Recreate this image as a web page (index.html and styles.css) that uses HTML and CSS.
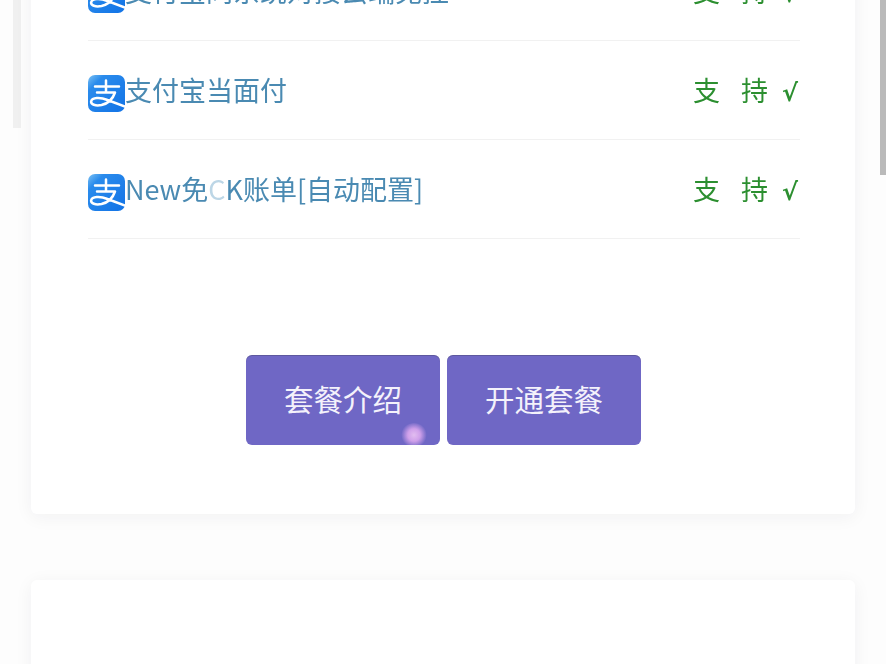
FILE: index.html
```html
<!DOCTYPE html>
<html lang="zh-CN">
<head>
<meta charset="utf-8">
<title>套餐</title>
<link rel="stylesheet" href="styles.css">
</head>
<body>
<svg class="defs" width="0" height="0" aria-hidden="true">
  <defs>
    <linearGradient id="ali" x1="0" y1="0" x2="1" y2="1">
      <stop offset="0" stop-color="#7cc2f3"/>
      <stop offset="0.22" stop-color="#2a8bec"/>
      <stop offset="1" stop-color="#1273e6"/>
    </linearGradient>
    <symbol id="alipay" viewBox="0 0 37 37">
      <rect width="37" height="37" rx="7" fill="url(#ali)"/>
      <path d="M7 11.5H31M18 5.5V17.5M9 17.5H27C25 23.5 20 28.5 13.5 30C7.5 31.2 2.5 29.5 3.2 26.2C4 22.5 12 22 19.5 25L37 31.5" fill="none" stroke="#fff" stroke-width="2.5" stroke-linecap="round" stroke-linejoin="round"/>
    </symbol>
  </defs>
</svg>
<div class="strip strip-left"></div>
<div class="strip strip-right"></div>
<main class="page">
  <section class="card card-plans">
    <ul class="rows">
      <li class="row">
        <svg class="logo"><use href="#alipay"/></svg>
        <span class="name">支付宝同系统对接云端免挂</span>
        <span class="state"><span class="state-word"><span>支</span><span>持</span></span><span class="tick">√</span></span>
      </li>
      <li class="row">
        <svg class="logo"><use href="#alipay"/></svg>
        <span class="name">支付宝当面付</span>
        <span class="state"><span class="state-word"><span>支</span><span>持</span></span><span class="tick">√</span></span>
      </li>
      <li class="row">
        <svg class="logo"><use href="#alipay"/></svg>
        <span class="name">New免<span class="faint">C</span>K账单[自动配置]</span>
        <span class="state"><span class="state-word"><span>支</span><span>持</span></span><span class="tick">√</span></span>
      </li>
    </ul>
    <div class="actions">
      <button class="btn" type="button">套餐介绍<span class="glow"></span></button>
      <button class="btn" type="button">开通套餐</button>
    </div>
  </section>
  <section class="card card-next"></section>
</main>
</body>
</html>
```
FILE: styles.css
```css
html, body {
  margin: 0;
  height: 100%;
  overflow: hidden;
  background: #fdfdfd;
  font-family: "Noto Sans CJK SC", "Noto Sans", sans-serif;
}

.defs {
  display: block;
  height: 0;
}

.strip {
  position: absolute;
  top: 0;
}

.strip-left {
  left: 13px;
  width: 8px;
  height: 128px;
  background: #f0f0f0;
}

.strip-right {
  left: 880px;
  width: 6px;
  height: 175px;
  background: #bababa;
}

.page {
  display: flex;
  flex-direction: column;
  gap: 66px;
  margin: -58px 31px 0;
}

.card {
  position: relative;
  background: #fff;
  border-radius: 6px;
  box-shadow: 0 3px 18px rgba(40, 30, 60, 0.055);
}

.card-plans {
  padding: 0 55px 69px 57px;
}

.card-next {
  height: 120px;
}

.rows {
  list-style: none;
  margin: 0;
  padding: 0;
}

.row {
  display: flex;
  align-items: center;
  height: 98px;
  border-bottom: 1px solid #f1f1f1;
}

.logo {
  width: 37px;
  height: 37px;
  flex: none;
  margin-top: 6px;
  filter: blur(0.4px);
}

.name {
  flex: 1;
  margin-top: -2px;
  font-size: 27px;
  color: #4a8ab2;
  white-space: nowrap;
  filter: blur(0.35px);
}

.faint {
  color: #bcd6e6;
}

.state {
  display: flex;
  align-items: center;
  margin-top: -2px;
  font-size: 27px;
  color: #2c8f30;
  filter: blur(0.35px);
}

.state-word {
  display: flex;
  gap: 21px;
}

.tick {
  font-family: "DejaVu Sans", sans-serif;
  font-size: 24px;
  font-weight: 700;
  margin: 8px 2px 0 14px;
}

.actions {
  display: flex;
  justify-content: center;
  gap: 7px;
  margin: 116px 0 0 -1px;
}

.btn {
  position: relative;
  width: 194px;
  height: 90px;
  padding: 0 0 5px;
  border: 0;
  border-radius: 6px;
  background: #6f67c5;
  box-shadow: inset 0 1px rgba(60, 60, 90, 0.35);
  color: #f4f2fb;
  font-family: inherit;
  font-size: 29.5px;
  overflow: hidden;
}

.glow {
  position: absolute;
  right: 13px;
  bottom: -2px;
  width: 26px;
  height: 24px;
  border-radius: 50%;
  background: radial-gradient(circle, #e2bdf0 0, #cfa0ea 35%, rgba(190, 130, 225, 0) 72%);
}
```
